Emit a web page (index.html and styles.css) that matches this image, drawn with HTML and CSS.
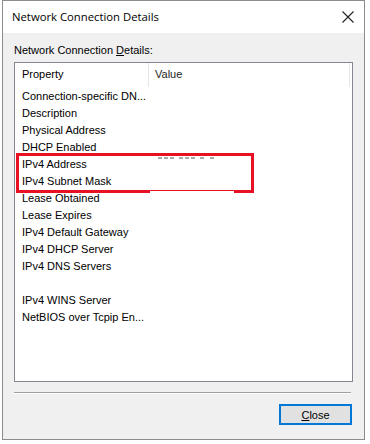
FILE: index.html
```html
<!DOCTYPE html>
<html lang="en">
<head>
    <meta charset="UTF-8">
    <title>Network Connection Details</title>
    <link rel="stylesheet" href="styles.css">
</head>
<body>
    <div class="window">
        <header class="titlebar">
            <span class="title">Network Connection Details</span>
            <svg class="close-x" width="12" height="12" viewBox="0 0 12 12">
                <path d="M0.5 0.5 L11.5 11.5 M11.5 0.5 L0.5 11.5" stroke="#222" stroke-width="1.1" fill="none"/>
            </svg>
        </header>

        <div class="content">
            <div class="label">Network Connection <u>D</u>etails:</div>

            <div class="listbox">
                <div class="list-header">
                    <div class="col-prop">Property</div>
                    <div class="col-value">Value</div>
                </div>
                <div class="rows">
                    <div class="row">Connection-specific DN...</div>
                    <div class="row">Description</div>
                    <div class="row">Physical Address</div>
                    <div class="row">DHCP Enabled</div>
                    <div class="highlight">
                        <div class="row">IPv4 Address
                            <!-- top pixels of the hidden value peeking out -->
                            <svg class="ghost" width="60" height="2" viewBox="0 0 60 2">
                                <path d="M1 1 H5 M7 1 H11 M13 1 H17 M22 1 H26 M28 1 H32 M34 1 H38 M43 1 H47 M53 1 H57" stroke="#555" stroke-width="1"/>
                            </svg>
                        </div>
                        <div class="row">IPv4 Subnet Mask</div>
                        <span class="gap"></span>
                    </div>
                    <div class="row">Lease Obtained</div>
                    <div class="row">Lease Expires</div>
                    <div class="row">IPv4 Default Gateway</div>
                    <div class="row">IPv4 DHCP Server</div>
                    <div class="row">IPv4 DNS Servers</div>
                    <div class="row"></div>
                    <div class="row">IPv4 WINS Server</div>
                    <div class="row">NetBIOS over Tcpip En...</div>
                </div>
            </div>

            <div class="separator"></div>

            <div class="footer">
                <button class="btn-close"><u>C</u>lose</button>
            </div>
        </div>
    </div>
</body>
</html>
```

FILE: styles.css
```css
body {
    margin: 0;
    padding: 0;
    background-color: #ffffff;
    font-family: 'Liberation Sans', Arial, sans-serif;
    color: #000;
}

.window {
    margin-left: 2px;
    width: 361px;
    height: 438px;
    border: 1px solid #8c8c8c;
    display: flex;
    flex-direction: column;
}

.titlebar {
    height: 32px;
    background-color: #ffffff;
    display: flex;
    align-items: center;
    justify-content: space-between;
    padding: 0 10px 0 9px;
    flex-shrink: 0;
}

.title {
    font-family: 'Open Sans', 'Noto Sans', sans-serif;
    font-size: 11.3px;
    color: #000;
    margin-top: -1px;
}

.close-x {
    margin-top: -1px;
}

.content {
    flex: 1;
    background-color: #f0f0f0;
    padding: 0 11px 0 11px;
    display: flex;
    flex-direction: column;
}

.label {
    font-size: 11px;
    height: 13px;
    margin-top: 11px;
    margin-bottom: 5px;
}

.listbox {
    height: 318px;
    background-color: #ffffff;
    border: 1px solid #828790;
    display: flex;
    flex-direction: column;
}

.list-header {
    display: flex;
    height: 24px;
    font-size: 11px;
    color: #000;
}

.col-prop {
    width: 126px;
    padding-left: 7px;
    line-height: 23px;
    border-right: 1px solid #e5e5e5;
}

.col-value {
    flex: 1;
    padding-left: 6px;
    line-height: 23px;
    margin-right: 2px;
    border-right: 1px solid #e5e5e5;
    color: #1e1e1e;
}

.rows {
    display: flex;
    flex-direction: column;
    padding-top: 1px;
}

.row {
    height: 17px;
    line-height: 17px;
    font-size: 11px;
    padding-left: 7px;
    white-space: nowrap;
    position: relative;
}

.highlight {
    margin-left: 1px;
    width: 232px;
    border: 3px solid #e81123;
    margin-top: -3px;
    margin-bottom: -3px;
    position: relative;
    z-index: 1;
}

.highlight .row {
    padding-left: 3px;
}

.ghost {
    position: absolute;
    left: 138px;
    top: 1px;
}

.gap {
    position: absolute;
    left: 131px;
    bottom: -3px;
    width: 84px;
    height: 2px;
    background-color: #ffffff;
}

.separator {
    margin-top: 10px;
    height: 1px;
    margin-right: 2px;
    background-color: #a0a0a0;
    border-bottom: 1px solid #ffffff;
}

.footer {
    display: flex;
    justify-content: flex-end;
    padding-top: 10px;
}

.btn-close {
    width: 73px;
    height: 21px;
    background-color: #e1e1e1;
    border: 2px solid #0078d7;
    font-family: 'Liberation Sans', Arial, sans-serif;
    font-size: 11px;
    color: #000;
    padding: 0;
    margin-right: 1px;
}
```
